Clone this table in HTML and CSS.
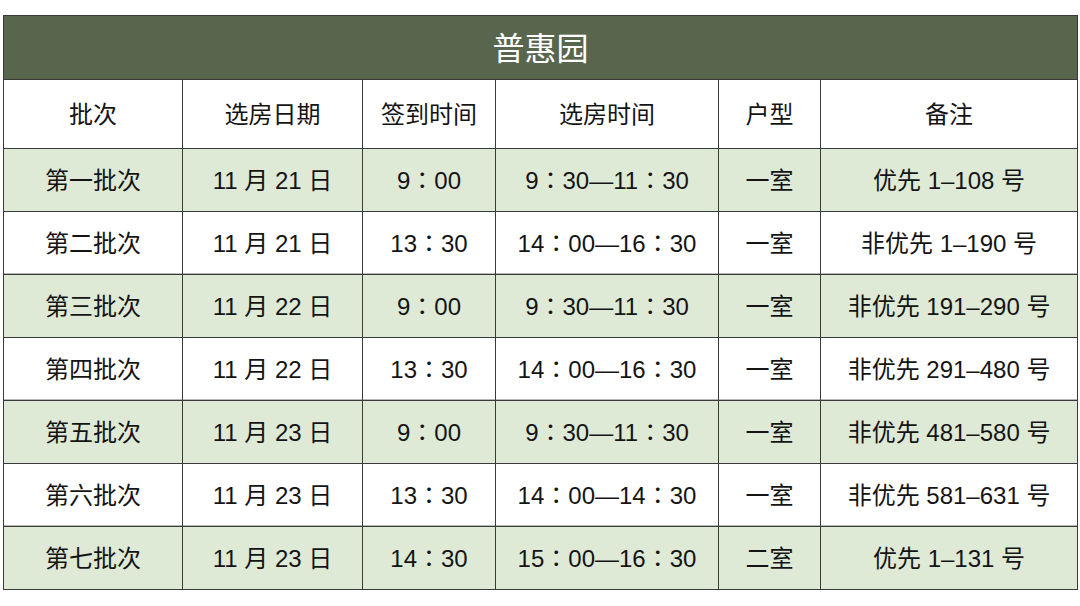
FILE: index.html
```html
<!DOCTYPE html>
<html lang="zh">
<head>
<meta charset="utf-8">
<link rel="stylesheet" href="styles.css">
</head>
<body>
<div class="wrap">
<table class="sched">
<colgroup>
<col class="c1"><col class="c2"><col class="c3"><col class="c4"><col class="c5"><col class="c6">
</colgroup>
<thead>
<tr class="title"><th colspan="6">普惠园</th></tr>
<tr class="head"><th>批次</th><th>选房日期</th><th>签到时间</th><th>选房时间</th><th>户型</th><th>备注</th></tr>
</thead>
<tbody>
<tr class="g"><td>第一批次</td><td>11 月 21 日</td><td>9<span class="cl">：</span>00</td><td>9<span class="cl">：</span>30—11<span class="cl">：</span>30</td><td>一室</td><td>优先 1–108 号</td></tr>
<tr><td>第二批次</td><td>11 月 21 日</td><td>13<span class="cl">：</span>30</td><td>14<span class="cl">：</span>00—16<span class="cl">：</span>30</td><td>一室</td><td>非优先 1–190 号</td></tr>
<tr class="g"><td>第三批次</td><td>11 月 22 日</td><td>9<span class="cl">：</span>00</td><td>9<span class="cl">：</span>30—11<span class="cl">：</span>30</td><td>一室</td><td>非优先 191–290 号</td></tr>
<tr><td>第四批次</td><td>11 月 22 日</td><td>13<span class="cl">：</span>30</td><td>14<span class="cl">：</span>00—16<span class="cl">：</span>30</td><td>一室</td><td>非优先 291–480 号</td></tr>
<tr class="g"><td>第五批次</td><td>11 月 23 日</td><td>9<span class="cl">：</span>00</td><td>9<span class="cl">：</span>30—11<span class="cl">：</span>30</td><td>一室</td><td>非优先 481–580 号</td></tr>
<tr><td>第六批次</td><td>11 月 23 日</td><td>13<span class="cl">：</span>30</td><td>14<span class="cl">：</span>00—14<span class="cl">：</span>30</td><td>一室</td><td>非优先 581–631 号</td></tr>
<tr class="g"><td>第七批次</td><td>11 月 23 日</td><td>14<span class="cl">：</span>30</td><td>15<span class="cl">：</span>00—16<span class="cl">：</span>30</td><td>二室</td><td>优先 1–131 号</td></tr>
</tbody>
</table>
</div>
</body>
</html>
```
FILE: styles.css
```css
html, body {
  margin: 0;
  padding: 0;
  background: #ffffff;
}
.wrap {
  padding: 15px 3px 0 3px;
}
.sched {
  width: 1074px;
  border-collapse: collapse;
  table-layout: fixed;
  font-family: "Liberation Sans", "Noto Sans CJK SC", sans-serif;
  color: #141414;
  font-size: 24px;
}
.c1 { width: 179px; }
.c2 { width: 180px; }
.c3 { width: 133px; }
.c4 { width: 223px; }
.c5 { width: 102px; }
.c6 { width: 257px; }
.sched th, .sched td {
  border: 1px solid #3a3a3a;
  text-align: center;
  padding: 0 0 3px 0;
  font-weight: normal;
}
.sched tr {
  box-shadow: inset 0 -2px 0 #b8b8b8;
}
.cl {
  font-family: "Noto Sans CJK TC", sans-serif;
}
.title th {
  background: #58664e;
  color: #ffffff;
  font-size: 32px;
  height: 60px;
}
.head th {
  height: 65px;
  background: #ffffff;
}
.sched td {
  height: 59px;
}
.g td {
  background: #dfead6;
}
```
